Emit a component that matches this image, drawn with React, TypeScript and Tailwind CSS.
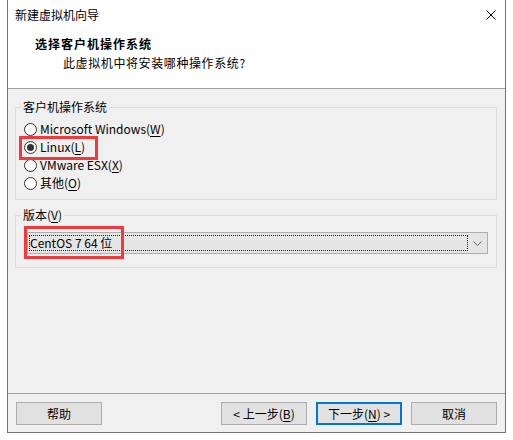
import React from "react";

const font = { fontFamily: '"Noto Sans CJK SC", "Noto Sans", sans-serif' };

function Mn({ c }: { c: string }) {
  return (
    <>
      (<span className="underline underline-offset-2">{c}</span>)
    </>
  );
}

function Radio({ checked, children }: { checked?: boolean; children: React.ReactNode }) {
  return (
    <div className="flex h-[18px] items-center pl-[8px]">
      <span className="flex h-[13px] w-[13px] items-center justify-center rounded-full border border-[#333333] bg-white">
        {checked && <span className="h-[7px] w-[7px] rounded-full bg-[#333333]" />}
      </span>
      <span className="ml-[3px] leading-[16px]">{children}</span>
    </div>
  );
}

function Btn({ children, primary }: { children: React.ReactNode; primary?: boolean }) {
  return (
    <div
      className={
        "flex h-[23px] w-[86px] items-center justify-center bg-[#e1e1e1] leading-[16px] " +
        (primary ? "border-2 border-[#0078d7]" : "border border-[#adadad]")
      }
    >
      {children}
    </div>
  );
}

export default function App() {
  return (
    <div className="h-[440px] w-[513px] bg-white text-[12px] text-black" style={font}>
      <div className="ml-[7px] flex h-[433px] w-[499px] flex-col border-x border-b border-[#747474] bg-[#f0f0f0]">
        {/* white header */}
        <div className="h-[89px] border-b border-[#a0a0a0] bg-white">
          <div className="flex h-[30px] items-center justify-between pl-[7px] pr-[9px]">
            <span className="leading-[16px]">新建虚拟机向导</span>
            <svg width="10" height="10" viewBox="0 0 10 10" className="mt-[-1px]">
              <path d="M0.5 0.5 L9.5 9.5 M9.5 0.5 L0.5 9.5" stroke="#000" strokeWidth="1" fill="none" />
            </svg>
          </div>
          <div className="pl-[27px] pt-[6px] font-bold leading-[16px] tracking-[1px]">选择客户机操作系统</div>
          <div className="mt-[3px] pl-[55px] leading-[16px] tracking-[0.6px]">此虚拟机中将安装哪种操作系统?</div>
        </div>

        {/* content */}
        <div className="flex flex-1 flex-col px-[8px] pl-[7px]">
          <fieldset className="mt-[10px] border border-[#dcdcdc] pb-[7px]">
            <legend className="ml-[5px] px-[2px] leading-[16px]">客户机操作系统</legend>
            <div className="pt-[5px]">
              <Radio>
                Microsoft Windows<Mn c="W" />
              </Radio>
              <div className="relative">
                <Radio checked>
                  Linux<Mn c="L" />
                </Radio>
                <span className="pointer-events-none absolute left-[3px] top-[-2px] h-[24px] w-[79px] border-[3px] border-[#f03a3c]" />
              </div>
              <Radio>
                VMware ESX<Mn c="X" />
              </Radio>
              <Radio>
                其他<Mn c="O" />
              </Radio>
            </div>
          </fieldset>

          <fieldset className="mt-[7px] border border-[#dcdcdc] pb-[13px]">
            <legend className="ml-[5px] px-[2px] leading-[16px]">
              版本<Mn c="V" />
            </legend>
            <div className="ml-[11px] mr-[8px] pt-[9px]">
              <div className="relative flex h-[22px] items-center border border-[#adadad] bg-[#e5e5e5]">
                <div className="ml-[1px] flex h-[16px] flex-1 items-center border border-dotted border-[#222]">
                  <span className="leading-[16px]">CentOS 7 64 位</span>
                </div>
                <div className="flex w-[19px] items-center justify-center">
                  <svg width="9" height="5" viewBox="0 0 9 5">
                    <path d="M0.5 0.5 L4.5 4.5 L8.5 0.5" stroke="#606060" strokeWidth="1" fill="none" />
                  </svg>
                </div>
                <span className="pointer-events-none absolute left-[-4px] top-[-7px] h-[33px] w-[100px] border-[3px] border-[#f03a3c]" />
              </div>
            </div>
          </fieldset>
        </div>

        {/* footer */}
        <div className="flex h-[39px] items-start justify-between border-t border-[#a0a0a0] px-[8px] pt-[8px]">
          <Btn>帮助</Btn>
          <div className="flex gap-[9px]">
            <Btn>
              &lt; 上一步<Mn c="B" />
            </Btn>
            <Btn primary>
              下一步<Mn c="N" /> &gt;
            </Btn>
            <Btn>取消</Btn>
          </div>
        </div>
      </div>
    </div>
  );
}
